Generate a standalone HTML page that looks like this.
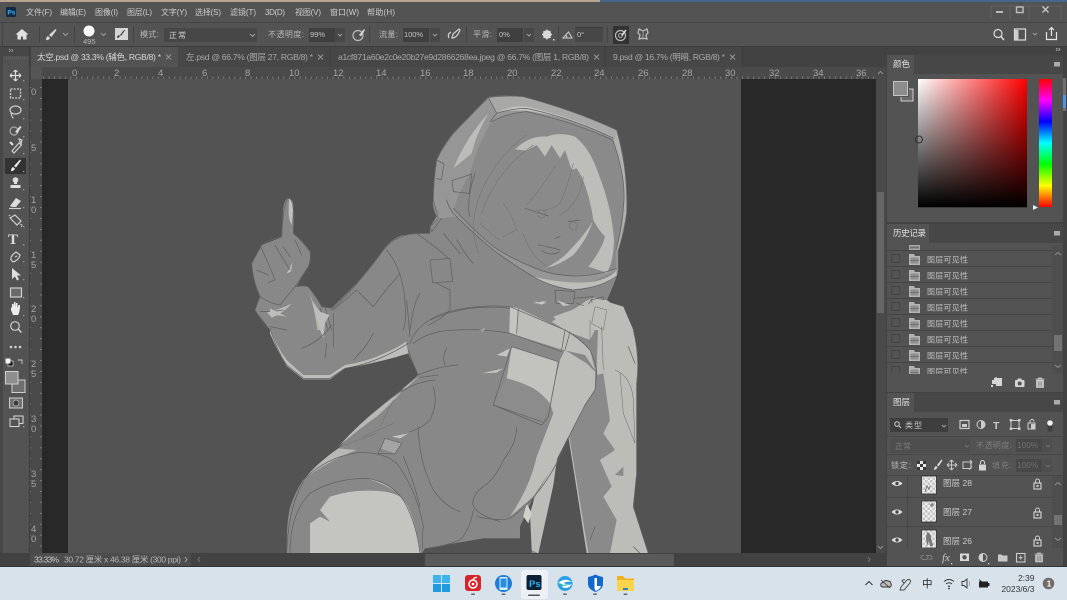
<!DOCTYPE html>
<html lang="zh"><head><meta charset="utf-8"><title>Photoshop</title>
<style>
html,body{margin:0;padding:0;width:1067px;height:600px;overflow:hidden;background:#424242}
svg{display:block;position:absolute;left:0;top:0;filter:blur(.35px)}
text{font-family:"Liberation Sans","Noto Sans CJK SC",sans-serif;font-size:8px;fill:#c4c4c4}
.ic{fill:none;stroke:#cfcfcf;stroke-width:1.2}
.f{fill:#cfcfcf;stroke:none}
.l{fill:none;stroke:#626262;stroke-width:2.2;stroke-linejoin:round;stroke-linecap:round}
.t{fill:none;stroke:#727272;stroke-width:1.6;stroke-linecap:round;stroke-linejoin:round}
.w{fill:#bcbcb8;stroke:none}
.sep{fill:#444}
.rn{font-size:9.5px;fill:#a5a5a5}
</style></head><body>
<svg width="1067" height="600" viewBox="0 0 1067 600" xmlns="http://www.w3.org/2000/svg">
<defs>
<linearGradient id="hx" x1="0" x2="1" y1="0" y2="0"><stop offset="0" stop-color="#fff"/><stop offset="1" stop-color="#f00"/></linearGradient>
<linearGradient id="vx" x1="0" x2="0" y1="0" y2="1"><stop offset="0" stop-color="#000" stop-opacity="0"/><stop offset="1" stop-color="#000"/></linearGradient>
<linearGradient id="hue" x1="0" x2="0" y1="0" y2="1"><stop offset="0" stop-color="#f00"/><stop offset=".167" stop-color="#f0f"/><stop offset=".333" stop-color="#00f"/><stop offset=".5" stop-color="#0ff"/><stop offset=".667" stop-color="#0f0"/><stop offset=".833" stop-color="#ff0"/><stop offset="1" stop-color="#f00"/></linearGradient>
<pattern id="chk" width="5" height="5" patternUnits="userSpaceOnUse"><rect width="5" height="5" fill="#eee"/><rect width="2.5" height="2.5" fill="#c5c5c5"/><rect x="2.5" y="2.5" width="2.5" height="2.5" fill="#c5c5c5"/></pattern>
<g id="hdoc"><path d="M0 1h5l1 2h5v9H0z" fill="#b5b5b5"/><rect x="1.5" y="4.5" width="8" height="6" fill="#8f8f8f"/><path d="M1 7.5h9" stroke="#6b6b6b" stroke-width=".7"/></g>
<g id="lk"><rect x="-3.5" y="-1" width="7" height="6" fill="none" stroke="#ccc" stroke-width="1.2"/><path d="M-2-1v-2a2 2 0 0 1 4 0v2" fill="none" stroke="#ccc"/><rect x="-1" y="1" width="2" height="2" fill="#ccc"/></g>
<g id="eye"><path d="M-5.5 0Q0-5 5.5 0Q0 5-5.5 0z" fill="#e2e2e2"/><circle r="1.7" fill="#444"/></g>
<pattern id="tickh" width="5.46" height="12" patternUnits="userSpaceOnUse" x="70.5" y="67"><rect x="0" y="9.5" width=".8" height="2.5" fill="#868686"/></pattern>
<pattern id="tickv" width="12" height="10.92" patternUnits="userSpaceOnUse" x="31" y="87"><rect x="9" y="0" width="3" height=".8" fill="#868686"/></pattern>
</defs>

<!-- wallpaper sliver and base -->
<rect width="1067" height="600" fill="#424242"/>
<rect width="1067" height="2" fill="#b7a58f"/>
<rect x="600" width="467" height="2" fill="#46658a"/>

<!-- title / menu -->
<rect y="2" width="1067" height="21" fill="#535353"/>
<rect x="6" y="7" width="10" height="10" rx="1.5" fill="#0f2a44"/>
<text x="7.4" y="14.6" style="font-size:6.5px;font-weight:bold;fill:#38b6f5">Ps</text>
<g>
<text x="26" y="15" textLength="26" style="fill:#ccc">文件(F)</text>
<text x="60" y="15" textLength="26" style="fill:#ccc">编辑(E)</text>
<text x="95" y="15" textLength="23" style="fill:#ccc">图像(I)</text>
<text x="127" y="15" textLength="25" style="fill:#ccc">图层(L)</text>
<text x="161" y="15" textLength="26" style="fill:#ccc">文字(Y)</text>
<text x="195" y="15" textLength="26" style="fill:#ccc">选择(S)</text>
<text x="230" y="15" textLength="26" style="fill:#ccc">滤镜(T)</text>
<text x="265" y="15" textLength="20" style="fill:#ccc">3D(D)</text>
<text x="295" y="15" textLength="26" style="fill:#ccc">视图(V)</text>
<text x="330" y="15" textLength="29" style="fill:#ccc">窗口(W)</text>
<text x="367" y="15" textLength="28" style="fill:#ccc">帮助(H)</text>
</g>
<path d="M991 19V6h70v13" fill="none" stroke="#626262"/>
<path d="M1010 6v13M1029 6v13" stroke="#626262"/>
<rect x="996" y="11" width="7" height="2" fill="#bbb"/>
<rect x="1016.5" y="7" width="6.5" height="5.5" fill="none" stroke="#bbb" stroke-width="1.5"/>
<path d="M1042.5 6.5l6 6M1048.5 6.5l-6 6" stroke="#c8c8c8" stroke-width="1.3"/>

<!-- options bar -->
<rect y="22" width="1067" height="1" fill="#444"/>
<rect y="23" width="1067" height="23" fill="#535353"/>
<rect y="46" width="1067" height="1" fill="#3d3d3d"/>
<rect y="23" x="2" width="1" height="23" fill="#454545"/>
<path d="M22 29l-6.5 5.5h2v5h3.5v-3h2v3h3.5v-5h2z" fill="#e0e0e0"/>
<rect x="39" y="26" width="1" height="17" class="sep"/>
<path d="M46 40q3 .5 4-2l-2-2q-2 1-2 4zM49 35l2.500 2 5-7-1-1z" fill="#d8d8d8"/>
<path d="M63 33l2.500 2.500 2.500-2.500" class="ic" style="stroke:#9a9a9a;stroke-width:1"/>
<rect x="74" y="26" width="1" height="17" class="sep"/>
<circle cx="89" cy="31" r="5.500" fill="#fafafa"/>
<text x="83" y="44" style="font-size:7.500px;fill:#b5b5b5">495</text>
<path d="M101 33l2.500 2.500 2.500-2.500" class="ic" style="stroke:#9a9a9a;stroke-width:1"/>
<rect x="115" y="28" width="13" height="12" fill="#d5d5d5"/>
<path d="M117 38q2 0 3-2l-1-1q-2 .5-2 3zM120 35l1 1 4-5.500-1-.5z" fill="#444"/>
<rect x="133" y="26" width="1" height="17" class="sep"/>
<text x="140" y="37" textLength="19" style="fill:#b8b8b8">模式:</text>
<rect x="164" y="28" width="93" height="14" rx="1" fill="#474747"/>
<text x="169" y="38" textLength="17" style="fill:#d0d0d0">正常</text>
<path d="M250 34l2.500 2.500 2.500-2.500" class="ic" style="stroke:#a0a0a0;stroke-width:1"/>
<text x="268" y="37" textLength="36" style="fill:#b8b8b8">不透明度:</text>
<rect x="309" y="28" width="26" height="14" fill="#3f3f3f"/><rect x="335" y="28" width="10" height="14" fill="#484848"/>
<text x="310" y="37" textLength="15" style="font-size:7.500px">99%</text>
<path d="M338 34l2 2 2-2" class="ic" style="stroke:#a0a0a0;stroke-width:1"/>
<circle cx="358" cy="35.500" r="5" class="ic" style="stroke:#bbb"/><path d="M359 35l5-6 1 1-4 6.500z" fill="#d5d5d5"/>
<rect x="369" y="26" width="1" height="17" class="sep"/>
<text x="379" y="37" textLength="19" style="fill:#b8b8b8">流量:</text>
<rect x="403" y="28" width="26" height="14" fill="#3f3f3f"/><rect x="430" y="28" width="10" height="14" fill="#484848"/>
<text x="404" y="37" textLength="19" style="font-size:7.500px">100%</text>
<path d="M433 34l2 2 2-2" class="ic" style="stroke:#a0a0a0;stroke-width:1"/>
<path d="M449 38q-2-4 2-6M452 38q5 0 8-8l-1-1-6 5z" class="ic"/>
<rect x="466" y="26" width="1" height="17" class="sep"/>
<text x="473" y="37" textLength="19" style="fill:#b8b8b8">平滑:</text>
<rect x="497" y="28" width="26" height="14" fill="#3f3f3f"/><rect x="524" y="28" width="10" height="14" fill="#484848"/>
<text x="499" y="37" style="font-size:7.500px">0%</text>
<path d="M527 34l2 2 2-2" class="ic" style="stroke:#a0a0a0;stroke-width:1"/>
<circle cx="547" cy="34.500" r="3" fill="none" stroke="#d8d8d8" stroke-width="2.500"/>
<path d="M547 29.500v10M542 34.500h10M543.500 31l7 7M550.500 31l-7 7" stroke="#d8d8d8" stroke-width="1.200"/>
<rect x="553" y="39" width="1.500" height="1.500" fill="#ddd"/>
<rect x="558" y="26" width="1" height="17" class="sep"/>
<path d="M563 38h9l-3.500-6zM567 38q0-2-1.500-3" class="ic" style="stroke-width:1"/>
<rect x="575" y="27" width="28" height="15" fill="#474747"/><rect x="575" y="27" width="28" height=".8" fill="#3a3a3a"/>
<text x="577" y="37" style="font-size:7.500px">0°</text>
<rect x="607" y="26" width="1" height="17" class="sep"/>
<rect x="613" y="26" width="16" height="18" fill="#333"/>
<circle cx="620.500" cy="35.500" r="5" class="ic" style="stroke:#bbb"/><circle cx="620.500" cy="35.500" r="2" class="ic" style="stroke:#999"/><path d="M621 35l4.500-5.500 1 1-4 5.500z" fill="#ddd"/>
<path d="M643 31l-4-2-1 4 2 2-1 4 4-1 4 1-1-4 2-2-1-4z" class="ic" style="stroke:#c4c4c4"/><path d="M643 30v10" stroke="#999"/>
<circle cx="998" cy="33.500" r="4" class="ic" style="stroke:#ddd"/><path d="M1001 36.500l3 3.500" class="ic" style="stroke:#ddd;stroke-width:1.500"/>
<rect x="1014.500" y="29" width="11" height="11" fill="none" stroke="#ddd" stroke-width="1.200"/><rect x="1015" y="30" width="3.500" height="9.500" fill="#ccc"/>
<path d="M1033 33l2 2 2-2" class="ic" style="stroke:#a0a0a0;stroke-width:1"/>
<path d="M1046.500 32v7.500h10V32M1051.500 36V28M1049 30l2.500-2.500 2.500 2.500" class="ic" style="stroke:#e5e5e5"/>

<!-- left tool strip -->
<rect y="47" width="30" height="506" fill="#535353"/>
<rect x="0" y="47" width="3" height="520" fill="#474747"/>
<rect x="29" y="47" width="1" height="520" fill="#3d3d3d"/>
<rect x="3" y="47" width="26" height="9" fill="#474747"/>
<path d="M9 49l1.500 1.500L9 52M11.500 49l1.500 1.500L11.500 52" class="ic" style="stroke:#aaa;stroke-width:.7"/>
<path d="M6 58h20" stroke="#6a6a6a" stroke-dasharray="1 1"/>
<path d="M15.500 70v11M10 75.500h11M15.500 70l-2 2M15.500 70l2 2M15.500 81l-2-2M15.500 81l2-2M10 75.500l2-2M10 75.500l2 2M21 75.500l-2-2M21 75.500l-2 2" class="ic" style="stroke:#dcdcdc"/>
<rect x="10.500" y="89" width="10" height="9" fill="none" stroke="#cfcfcf" stroke-width="1.300" stroke-dasharray="2 1.200"/>
<ellipse cx="15.500" cy="110" rx="5.500" ry="4" class="ic"/><path d="M11 113q1 5 2.500 5" class="ic"/>
<circle cx="14" cy="131" r="4" class="ic" style="stroke:#aaa"/><path d="M15 132l5-6 1.500 1-4 6z" fill="#dedede"/>
<path d="M12 151l7-8 2.500 2-7.500 8zM19 139l3 1-1 4z" class="ic"/><path d="M10 142l3 3" stroke="#ddd" stroke-width="2"/>
<rect x="5" y="158" width="21" height="16" fill="#333"/>
<path d="M11 171q3 .5 4-2.500l-2-1.500q-2 1-2 4zM14 166l2 1.500 5-7-1-1z" fill="#ececec"/>
<circle cx="15.500" cy="180" r="2.800" fill="#ddd"/><path d="M14 182h3v2h-3zM10.500 185h10v3h-10z" fill="#ddd"/>
<path d="M10 206l6-8 5 3-5 6h-4z" fill="#ddd"/><path d="M9 208.500h12" class="ic"/>
<path d="M10 218l5-3 6 6-4 4-6-6zM10 216l-1-1" class="ic"/><path d="M20 224l2 1-.5 2" class="ic" style="stroke-width:.9"/>
<text x="8" y="244" style="font-family:'Liberation Serif',serif;font-size:15px;font-weight:bold;fill:#dcdcdc">T</text>
<path d="M11 260q-1-4 5-8l4 3q-1 5-7 7zM15 257l2-1" class="ic"/>
<path d="M12 268v11l3-2.500 2 4 2-1-2-4h4z" fill="#dfdfdf"/>
<rect x="10.500" y="288" width="11" height="9" fill="#6a6a6a" stroke="#d0d0d0" stroke-width="1.200"/>
<path d="M11 310v-3l1 1v-4h1.500v3l.5-5h1.500v5l.5-4h1.500v5l1-3h1.500q0 7-2 10h-5z" fill="#ececec"/>
<circle cx="15" cy="326" r="4.300" class="ic"/><path d="M18 329l3.500 3.500" class="ic" style="stroke-width:1.500"/>
<circle cx="11" cy="347" r="1.300" class="f"/><circle cx="15.500" cy="347" r="1.300" class="f"/><circle cx="20" cy="347" r="1.300" class="f"/>
<rect x="8" y="361" width="5" height="5" fill="#111" stroke="#ddd" stroke-width=".7"/><rect x="5.500" y="358.500" width="5" height="5" fill="#f2f2f2"/>
<path d="M18 360h4v4" class="ic" style="stroke-width:.9"/>
<rect x="12" y="380" width="13" height="12.500" fill="#6f6f6f" stroke="#cfcfcf"/>
<rect x="5.500" y="371.500" width="12.500" height="12.500" fill="#8e8e8e" stroke="#cfcfcf"/>
<rect x="9.500" y="398" width="13" height="10" fill="#707070" stroke="#cfcfcf"/><circle cx="16" cy="403" r="3" fill="#3d3d3d" stroke="#bbb" stroke-width=".7"/>
<rect x="14" y="416" width="9" height="7.500" fill="none" stroke="#cfcfcf" stroke-width="1.100"/><rect x="10" y="419" width="9" height="7.500" fill="#535353" stroke="#cfcfcf" stroke-width="1.100"/>
<g fill="#9c9c9c"><rect x="23" y="80" width="1.300" height="1.300"/><rect x="23" y="99" width="1.300" height="1.300"/><rect x="23" y="118" width="1.300" height="1.300"/><rect x="23" y="136" width="1.300" height="1.300"/><rect x="23" y="153" width="1.300" height="1.300"/><rect x="23" y="171" width="1.300" height="1.300"/><rect x="23" y="189" width="1.300" height="1.300"/><rect x="23" y="207" width="1.300" height="1.300"/><rect x="23" y="226" width="1.300" height="1.300"/><rect x="23" y="244" width="1.300" height="1.300"/><rect x="23" y="261" width="1.300" height="1.300"/><rect x="23" y="279" width="1.300" height="1.300"/><rect x="23" y="297" width="1.300" height="1.300"/><rect x="23" y="315" width="1.300" height="1.300"/><rect x="23" y="426" width="1.300" height="1.300"/></g>

<!-- tabs -->
<rect x="30" y="47" width="856" height="20" fill="#424242"/>
<rect x="31" y="47" width="147" height="20" fill="#535353"/>
<rect x="178" y="47" width="152" height="20" fill="#474747"/>
<rect x="330" y="47" width="275" height="20" fill="#474747"/>
<rect x="605" y="47" width="137" height="20" fill="#474747"/>
<path d="M330 47v20M605 47v20M742 47v20" stroke="#3c3c3c"/>
<text x="37" y="60" textLength="124" style="font-size:8.500px;fill:#d8d8d8">太空.psd @ 33.3% (辅色, RGB/8) *</text>
<text x="186" y="60" textLength="127" style="font-size:8.500px;fill:#a8a8a8">左.psd @ 66.7% (图层 27, RGB/8) *</text>
<text x="338" y="60" textLength="251" style="font-size:8.500px;fill:#a8a8a8">a1cf871a60e2c0e20b27e9d2866268ea.jpeg @ 66.7% (图层 1, RGB/8)</text>
<text x="613" y="60" textLength="112" style="font-size:8.500px;fill:#a8a8a8">9.psd @ 16.7% (明暗, RGB/8) *</text>
<path d="M166 54.500l5 5M171 54.500l-5 5M318 54.500l5 5M323 54.500l-5 5M594 54.500l5 5M599 54.500l-5 5M730 54.500l5 5M735 54.500l-5 5" stroke="#9a9a9a" stroke-width=".9"/>

<!-- rulers -->
<rect x="30" y="67" width="846" height="12" fill="#4a4a4a"/>
<rect x="30" y="67" width="846" height="12" fill="url(#tickh)"/>
<rect x="31" y="67" width="11" height="12" fill="#555"/>
<rect x="30" y="79" width="12" height="474" fill="#4a4a4a"/>
<rect x="30" y="79" width="12" height="474" fill="url(#tickv)"/>
<g>
<text x="72" y="76" class="rn">0</text><text x="114" y="76" class="rn">2</text><text x="158" y="76" class="rn">4</text><text x="202" y="76" class="rn">6</text><text x="245" y="76" class="rn">8</text><text x="289" y="76" class="rn">10</text><text x="333" y="76" class="rn">12</text><text x="376" y="76" class="rn">14</text><text x="420" y="76" class="rn">16</text><text x="463" y="76" class="rn">18</text><text x="507" y="76" class="rn">20</text><text x="551" y="76" class="rn">22</text><text x="594" y="76" class="rn">24</text><text x="638" y="76" class="rn">26</text><text x="682" y="76" class="rn">28</text><text x="725" y="76" class="rn">30</text><text x="769" y="76" class="rn">32</text><text x="813" y="76" class="rn">34</text><text x="856" y="76" class="rn">36</text>
<text x="31" y="95" class="rn">0</text><text x="31" y="151" class="rn">5</text>
<text x="31" y="203" class="rn">1</text><text x="31" y="213" class="rn">0</text>
<text x="31" y="258" class="rn">1</text><text x="31" y="268" class="rn">5</text>
<text x="31" y="312" class="rn">2</text><text x="31" y="322" class="rn">0</text>
<text x="31" y="367" class="rn">2</text><text x="31" y="377" class="rn">5</text>
<text x="31" y="422" class="rn">3</text><text x="31" y="432" class="rn">0</text>
<text x="31" y="477" class="rn">3</text><text x="31" y="487" class="rn">5</text>
<text x="31" y="532" class="rn">4</text><text x="31" y="542" class="rn">0</text>
</g>

<!-- canvas -->
<rect x="42" y="79" width="834" height="474" fill="#282828"/>
<rect x="68" y="79" width="673" height="474" fill="#535353"/>

<!-- figure silhouette -->
<path d="M288 198Q293 198 293 208Q294 222 293 233Q303 242 310 252Q311 260 308 267L296 287Q303 285 308 287Q316 295 322 307L332 308L350 290Q368 272 383 250Q392 238 403 235L430 233L430 227L438 218Q432 210 433 200Q433 180 437 160Q443 145 453 133L488 97Q505 94 523 97Q575 110 617 130Q628 170 627 213Q624 235 618 250L618 272Q614 285 607 300Q625 312 633 330Q640 360 637 383L637 473L633 507L648 553L287 553Q286 525 290 507Q295 492 303 480Q320 465 340 447Q358 425 377 410Q390 398 402 390L418 375L408 353Q378 362 345 368L330 378L303 378L287 365Q277 350 270 330L255 310L260 297Q252 280 252 263L262 245L282 237L283 210Q284 200 288 198Z" fill="#888"/>

<!-- upper group -->
<g transform="translate(240 90) scale(.33333)">
 <path d="M745 22Q800 15 850 20Q1000 60 1130 120Q1165 240 1160 370Q1150 440 1135 480L1135 540L1000 600L880 560L760 480L650 380L600 385L570 410L590 380L580 330L590 210L640 130Z" fill="#969696"/>
 <path d="M745 22Q800 15 850 20Q1000 60 1130 120L1120 145Q1000 85 860 55Q810 55 770 70Z" fill="#a8a8a6"/>
 <path d="M640 235Q680 140 745 70Q710 130 695 190Z" fill="#bcbcb8"/>
 <path d="M775 65Q820 45 860 50Q990 80 1110 135Q1000 85 860 62Q815 60 775 65Z" fill="#c4c4c0"/>
 <path d="M1130 120Q1165 240 1160 370L1135 480L1128 480Q1150 420 1152 340Q1150 240 1120 150Z" fill="#b0b0ad"/>
 <!-- visor -->
 <path d="M755 95Q800 70 860 65Q1000 95 1118 150Q1155 250 1152 330Q1145 420 1128 480L1128 535Q1060 560 1000 558Q940 555 900 540Q820 510 760 470L640 360Q655 310 690 250Q715 160 755 95Z" fill="#8a8a8a"/>
 <!-- hair light -->
 <path d="M825 178Q870 135 920 140Q960 125 1005 140Q1050 175 1075 250Q1115 350 1122 450Q1120 520 1100 548L1045 530Q1085 480 1095 440Q1075 420 1060 390Q1050 320 1025 260L1010 235L995 240L975 180L960 205L935 165L915 200L890 165L860 182Z" fill="#bdbdb9"/>
 <path d="M1058 395Q1040 450 1000 495Q960 525 915 535Q965 510 990 480Q1030 440 1058 395Z" fill="#bdbdb9"/>
 <!-- collar -->
 <path d="M880 560Q990 585 1060 575Q1110 565 1130 540L1130 560Q1090 590 1000 598Q930 590 880 560Z" fill="#bdbdb9"/>
 <!-- chest light under collar -->
 <path d="M935 695Q1000 660 1040 632L1060 622L1150 650L1180 720H975Z" fill="#bcbcb8"/>
 <path d="M810 650L835 655L975 720H810Z" fill="#c2c2be"/>
 <path d="M1060 650L1095 655L1095 720L1055 720Z" fill="#c4c4c0"/>
 <path d="M880 640L920 632L905 640Z" fill="#c8c8c4"/>
 <!-- hand highlights -->
 <path d="M147 325Q160 330 160 350L155 405Q145 385 146 365Z" fill="#c0c0bc"/>
 <path d="M80 665Q120 660 155 640Q130 670 95 683Z" fill="#bdbdb9"/>
 <path d="M205 600Q225 650 245 720L232 720Q225 660 205 600Z" fill="#b4b4b0"/>
 <path d="M140 550Q150 535 157 518L153 545Z" fill="#c0c0bc"/>
 <!-- helmet lines -->
 <path class="l" d="M745 22L770 70L750 95M770 70Q815 55 860 55Q1000 85 1120 145M745 22Q800 15 850 20Q1000 60 1130 120Q1165 240 1160 370Q1150 440 1135 480L1135 540M755 95Q800 70 860 65Q1000 95 1118 150Q1155 250 1152 330Q1145 420 1128 480"/>
 <path class="l" d="M640 355Q700 420 760 470Q820 510 900 540Q940 555 1000 558Q1060 560 1130 535M620 330Q625 350 640 370Q700 430 760 480Q820 525 880 560Q930 590 1000 600Q1080 595 1135 555"/>
 <path class="l" d="M590 210L612 222L604 270L590 265M636 272L695 252L688 310L640 305Z"/>
 <path class="l" d="M745 22L640 130Q600 180 590 210Q580 270 580 330L595 385L570 410L575 425L605 385"/>
 <path class="l" d="M945 600L1005 605L1000 640L948 640ZM1000 625L1060 620L1040 650L1010 640M1055 630L1090 620L1100 690L1065 700Z"/>
 <!-- hair and face -->
 <path class="t" d="M715 490Q680 400 730 290Q780 190 860 135M880 165Q770 240 725 370M945 230Q900 300 860 345M1000 220Q980 300 960 340Q930 365 890 360M1030 260Q1020 340 960 375M790 340Q820 380 830 420L790 440M850 430Q870 500 930 535M720 400Q760 440 780 450"/>
 <path class="t" d="M917 372a12 12 0 1 1 0-.1zM1012 408a12 12 0 1 1 0-.1z"/>
 <path class="l" d="M855 355Q890 365 925 378M985 395L1020 390M895 465Q925 470 960 480M905 482Q930 500 958 486M945 445L960 440M705 250Q680 320 688 380"/>
 <!-- hand and arm -->
 <path class="l" d="M147 325Q130 330 125 440M147 325Q165 330 160 430Q190 455 210 485Q214 510 205 530L165 590Q190 585 205 590Q228 620 245 650L275 655M125 440Q90 448 65 465L35 520Q38 570 60 620L45 660L75 710M62 470Q90 530 105 570L85 578M105 465Q130 510 150 540M130 470L150 500M165 450L185 495M50 540L85 555M60 620Q90 640 120 645L165 590M60 665Q100 665 130 660M240 655L265 720M255 650L275 720"/>
 <path class="l" d="M275 660Q350 590 430 480Q460 440 520 430L570 430M440 480Q490 540 495 640Q500 690 490 720M530 430Q600 480 625 505M570 510L630 505L638 575L578 578ZM590 580L630 600L630 660Q600 690 565 705M280 660L350 600L400 650L430 610L480 550M510 720Q520 640 540 610M570 690Q680 640 810 655M650 450Q680 500 700 520M610 430L660 490"/>
</g>

<!-- lower group -->
<g transform="translate(270 300) scale(.33333)">
 <!-- right arm light -->
 <path d="M985 50L1010 0Q1060 35 1090 90Q1110 170 1100 250L1100 520L1090 620L1135 760H950L895 410L975 310L980 210Z" fill="#bcbcb8"/>
 <path d="M850 50L990 0L1010 0L985 70L960 120L880 90Z" fill="#bcbcb8"/>
 <path d="M1000 220L1020 360L1000 400L1035 450L990 480L1025 560L1000 590L1040 660L1020 760H955L898 410L945 310L980 225Z" fill="#8a8a8a"/>
 <path d="M1035 525L1060 500L1060 528Z" fill="#8a8a8a"/>
 <!-- torso right strip -->
 <path d="M885 150L950 190L975 215L975 270L945 315L900 400L862 480L790 590L720 650Q780 560 800 470L850 340L840 310L870 180Z" fill="#bdbdb9"/>
 <!-- belt -->
 <path d="M720 20L885 90Q930 115 960 150L975 210L945 165L880 150L720 100Z" fill="#bdbdb9"/>
 <path d="M720 20L745 25L740 100L718 98Z" fill="#c4c4c0"/>
 <!-- pocket -->
 <path d="M725 140L865 185L840 310Q815 280 790 265Q750 245 710 235Z" fill="#c2c2be"/>
 <path d="M710 235Q750 245 790 265Q815 280 840 310L815 375L670 315Z" fill="#8c8c8c"/>
 <!-- highlights -->
 <path d="M680 165L720 145L710 170ZM635 220L700 205L680 218Z" fill="#c4c4c0"/>
 <path d="M625 90L645 85L640 95Z" fill="#c4c4c0"/>
 <path d="M790 5L830 8L815 14ZM860 0L900 15L880 18Z" fill="#c4c4c0"/>
 <!-- arm bottom rim -->
 <path d="M0 85Q20 140 50 180L100 225H180L225 195Q300 185 385 140L408 125L415 160Q320 190 225 205L180 238H100L50 198Q20 150 0 100Z" fill="#bdbdb9"/>
 <path d="M125 0L150 90L160 115L165 70L178 45L150 35Z" fill="#bdbdb9"/>
 <path d="M0 25Q30 40 50 50L20 45L0 35Z" fill="#bdbdb9"/>
 <!-- left rim strips -->
 <path d="M445 232Q420 245 395 270L410 262ZM395 275Q290 345 205 440Q270 385 320 350Q365 310 395 275ZM205 445Q140 490 100 540Q160 490 260 450Z" fill="#b8b8b4"/>
 <path d="M365 410L415 400L390 415Z" fill="#c4c4c0"/>
 <path d="M345 415L395 430L375 460L330 445Z" fill="#a4a4a4"/>
 <!-- thigh -->
 <path d="M120 760L120 670L150 650L180 665L150 630L180 590Q240 570 300 572Q360 572 390 590Q430 620 452 760Z" fill="#c4c4c0"/>
 <path d="M290 535Q350 540 400 600Q370 560 290 535Z" fill="#bdbdb9"/>
 <!-- dark gap and lower -->
 <path d="M895 410L950 760H805L850 555L862 475Z" fill="#535353"/>
 <path d="M750 715L640 715L465 745L455 760H785L790 590L750 680Z" fill="#535353"/>
 <path d="M860 480L795 590L780 640L785 750L805 760L850 555Z" fill="#bcbcb8"/>
 <path d="M770 610L785 640L775 670L760 650Z" fill="#d0d0cc"/>
 <!-- torso lines -->
 <path class="l" d="M420 130Q440 70 520 40Q620 10 720 20M430 130Q480 90 560 90Q640 85 720 100M720 20L885 90Q930 115 960 150Q980 190 980 220L975 270L945 315M720 100L875 155M745 25L740 100M885 90L875 150M900 95L885 150M725 140L865 185L835 350L815 375L670 315L725 140M670 315L815 365"/>
 <path class="l" d="M945 315Q900 400 860 490Q800 600 720 655Q690 665 620 650M445 225Q500 200 565 195M530 145Q515 170 525 195M415 150Q420 170 445 225"/>
 <path class="l" d="M490 260Q505 310 480 360Q455 385 420 395M395 275Q440 245 495 240M450 232L505 225M445 380Q445 480 490 570Q525 620 570 635M740 380Q740 430 700 480Q680 530 640 560Q610 580 608 610Q610 640 690 665M610 630Q600 690 570 720Q520 740 470 745"/>
 <path class="l" d="M50 760Q55 620 100 545M60 760Q60 640 120 580Q190 535 290 535Q360 545 400 600Q440 670 450 760M100 540Q170 470 265 458Q340 455 380 490Q440 570 460 680Q455 720 458 745M400 470Q430 540 450 620"/>
 <path class="l" d="M325 460L345 415L395 430L375 462Z"/>
 <path class="t" d="M330 380L370 300M210 440L320 400M280 410L370 370"/>
 <path class="l" d="M1090 90Q1110 170 1100 250L1100 520L1090 620L1135 760M960 720L975 680M1090 740L1110 760M1075 140L1095 190"/>
 <path class="t" d="M1035 210Q1085 230 1090 300L1095 430M1050 220L1060 340L1095 430M960 130L960 60M995 80L1000 210M975 20L1010 30L1000 90L965 70Z"/>
 <!-- arm lines -->
 <path class="l" d="M0 85Q20 150 50 195L100 235H180L225 205Q320 190 415 130M95 145Q150 125 185 75M190 40L190 140M165 175L170 130M250 180Q290 140 310 100M0 80L50 90M410 0L420 110"/>
</g>

<!-- vertical scrollbar -->
<rect x="876" y="67" width="10" height="486" fill="#4a4a4a"/>
<rect x="877" y="192" width="7" height="121" fill="#666"/>
<path d="M878 74l2.500-2.500 2.500 2.500M878 546l2.500 2.500 2.500-2.500" class="ic" style="stroke:#8f8f8f;stroke-width:1"/>

<!-- status bar -->
<rect x="30" y="553" width="856" height="13" fill="#424242"/>
<rect x="30" y="553" width="161" height="13" fill="#4d4d4d"/>
<rect x="425" y="554" width="249" height="12" fill="#5a5a5a"/>
<text x="34" y="562.500" textLength="25" style="font-size:8.500px;fill:#cacaca">33.33%</text>
<text x="64" y="562.500" textLength="117" style="font-size:8.500px;fill:#b5b5b5">30.72 厘米 x 46.38 厘米 (300 ppi)</text>
<path d="M185 557l2 2.500-2 2.500" class="ic" style="stroke:#aaa;stroke-width:.9"/>
<path d="M200 557l-2 2.500 2 2.500M868 557l2 2.500-2 2.500" class="ic" style="stroke:#7a7a7a;stroke-width:.9"/>

<!-- right panels -->
<rect x="886" y="47" width="181" height="520" fill="#424242"/>
<path d="M1056 48l1.500 1.500-1.500 1.500M1058.500 48l1.500 1.500-1.500 1.500" class="ic" style="stroke:#bbb;stroke-width:.7"/>
<!-- colour panel -->
<rect x="887" y="55" width="176" height="167" fill="#535353"/>
<rect x="914" y="55" width="149" height="19" fill="#474747"/>
<text x="893" y="67" textLength="17" style="font-size:8.500px;fill:#e4e4e4">颜色</text>
<rect x="1054" y="62" width="6" height="4.500" fill="#aaa"/>
<rect x="901" y="89" width="12" height="12" fill="#6b6b6b" stroke="#cfcfcf"/>
<rect x="892.500" y="80.500" width="16" height="16" fill="#9a9a9a" stroke="#535353" stroke-width="1"/>
<rect x="893.500" y="81.500" width="14" height="14" fill="#8c8c8c" stroke="#c5c5c5"/>
<rect x="918" y="79" width="109" height="128" fill="url(#hx)"/>
<rect x="918" y="79" width="109" height="128" fill="url(#vx)"/>
<rect x="918" y="207" width="109" height="1" fill="#3b3b3b"/>
<circle cx="919" cy="139.500" r="3.500" fill="none" stroke="#333" stroke-width="1.100"/>
<rect x="1039" y="79" width="13" height="128" fill="url(#hue)"/>
<path d="M1033 205l5 2.500-5 2.500z" fill="#eee"/>
<rect x="1063" y="78" width="3" height="33" fill="#707070"/>
<rect x="1063" y="95" width="3" height="13" fill="#4d94e8"/>
<!-- history -->
<rect x="887" y="224" width="176" height="168" fill="#535353"/>
<rect x="929" y="224" width="134" height="19" fill="#474747"/>
<text x="893" y="236" textLength="33" style="font-size:8.500px;fill:#e4e4e4">历史记录</text>
<rect x="1054" y="231" width="6" height="4.500" fill="#aaa"/>
<g stroke="#464646" fill="none">
<path d="M887 250.500H1052M887 266.500H1052M887 282.500H1052M887 298.500H1052M887 314.500H1052M887 330.500H1052M887 346.500H1052M887 362.500H1052"/>
<rect x="891.500" y="254.500" width="8" height="8"/><rect x="891.500" y="270.500" width="8" height="8"/><rect x="891.500" y="286.500" width="8" height="8"/><rect x="891.500" y="302.500" width="8" height="8"/><rect x="891.500" y="318.500" width="8" height="8"/><rect x="891.500" y="334.500" width="8" height="8"/><rect x="891.500" y="350.500" width="8" height="8"/><rect x="891.500" y="366.500" width="8" height="8"/>
</g>
<rect x="909" y="245" width="11" height="5" fill="#a8a8a8"/><rect x="910" y="246.500" width="9" height="2" fill="#707070"/>
<use href="#hdoc" x="909" y="253"/><use href="#hdoc" x="909" y="269"/><use href="#hdoc" x="909" y="285"/><use href="#hdoc" x="909" y="301"/><use href="#hdoc" x="909" y="317"/><use href="#hdoc" x="909" y="333"/><use href="#hdoc" x="909" y="349"/><use href="#hdoc" x="909" y="365"/>
<g>
<text x="927" y="262.500" textLength="41" style="fill:#c0c0c0">图层可见性</text>
<text x="927" y="278.500" textLength="41" style="fill:#c0c0c0">图层可见性</text>
<text x="927" y="294.500" textLength="41" style="fill:#c0c0c0">图层可见性</text>
<text x="927" y="310.500" textLength="41" style="fill:#c0c0c0">图层可见性</text>
<text x="927" y="326.500" textLength="41" style="fill:#c0c0c0">图层可见性</text>
<text x="927" y="342.500" textLength="41" style="fill:#c0c0c0">图层可见性</text>
<text x="927" y="358.500" textLength="41" style="fill:#c0c0c0">图层可见性</text>
<text x="927" y="374.500" textLength="41" style="fill:#c0c0c0">图层可见性</text>
</g>
<rect x="887" y="374" width="176" height="18" fill="#535353"/>
<rect x="1052" y="245" width="11" height="129" fill="#4e4e4e"/>
<rect x="1054" y="335" width="8" height="16" fill="#727272"/>
<path d="M1055 255l3-2.500 3 2.500M1055 365l3 2.500 3-2.500" class="ic" style="stroke:#8f8f8f;stroke-width:1"/>
<path d="M992 384h5v-3h5v-3h-5v-1l-3 1v2h-2z" fill="#d5d5d5"/><path d="M998 378h4v8h-6v-3" fill="#d5d5d5"/><path d="M993 386h-2M992 385v2" stroke="#fff"/>
<rect x="1015" y="380" width="9.500" height="7" rx="1" fill="#d5d5d5"/><rect x="1017.500" y="378.500" width="4" height="2" fill="#d5d5d5"/><circle cx="1019.700" cy="383.500" r="2" fill="#535353"/>
<path d="M1036.500 380h7v7.500h-7zM1035.500 379h9M1038.500 379v-1h3v1" fill="#c8c8c8" stroke="#c8c8c8" stroke-width=".8"/><path d="M1038.500 381.500v5M1040 381.500v5M1041.500 381.500v5" stroke="#6b6b6b" stroke-width=".5"/>
<!-- layers -->
<rect x="887" y="393" width="176" height="173" fill="#535353"/>
<rect x="914" y="393" width="149" height="19" fill="#474747"/>
<text x="893" y="405" textLength="17" style="font-size:8.500px;fill:#e4e4e4">图层</text>
<rect x="1054" y="400" width="6" height="4.500" fill="#aaa"/>
<rect x="890" y="418" width="58" height="14" fill="#3e3e3e"/>
<circle cx="897" cy="424" r="2.300" class="ic" style="stroke-width:1"/><path d="M899 426l2 2" class="ic" style="stroke-width:1"/>
<text x="905" y="428" textLength="17">类型</text>
<path d="M942 425l2 2 2-2" class="ic" style="stroke:#a0a0a0;stroke-width:1"/>
<rect x="960" y="420.500" width="9" height="8" fill="none" stroke="#ccc" stroke-width="1.200"/><rect x="962" y="424" width="5" height="3" fill="#ccc"/>
<circle cx="981" cy="424.500" r="4" fill="none" stroke="#ccc"/><path d="M981 420.500a4 4 0 0 1 0 8z" fill="#ccc"/>
<text x="993" y="429" style="font-size:10.500px;font-weight:bold;fill:#ccc">T</text>
<rect x="1011" y="420.500" width="8" height="8" fill="none" stroke="#ccc"/><rect x="1009.700" y="419" width="2.500" height="2.500" fill="#ccc"/><rect x="1018" y="419" width="2.500" height="2.500" fill="#ccc"/><rect x="1009.700" y="427.500" width="2.500" height="2.500" fill="#ccc"/><rect x="1018" y="427.500" width="2.500" height="2.500" fill="#ccc"/>
<path d="M1028 429v-6h7v6zM1030 423v-1.500a2 2 0 0 1 4 0" fill="none" stroke="#ccc"/><rect x="1031" y="424" width="4" height="5" fill="#ccc"/>
<rect x="1047.500" y="420" width="5" height="12" rx="2.500" fill="#3f3f3f"/><circle cx="1050" cy="423" r="2.800" fill="#f0f0f0"/>
<path d="M887 436.500H1063M887 454.500H1063M887 475.500H1063" stroke="#474747"/>
<rect x="890" y="439" width="80" height="14" fill="#4e4e4e"/>
<text x="895" y="449" textLength="16" style="fill:#7b7b7b">正常</text>
<path d="M965 445l2 2 2-2" class="ic" style="stroke:#707070;stroke-width:1"/>
<text x="976" y="448" textLength="36" style="fill:#7e7e7e">不透明度:</text>
<rect x="1016" y="439" width="26" height="13" fill="#484848"/><rect x="1043" y="439" width="9" height="13" fill="#4e4e4e"/>
<text x="1017" y="448" textLength="21" style="font-size:8px;fill:#717171">100%</text>
<path d="M1046 445l2 2 2-2" class="ic" style="stroke:#6f6f6f;stroke-width:1"/>
<text x="891" y="468" textLength="20" style="fill:#bcbcbc">锁定:</text>
<rect x="917" y="461" width="9" height="9" fill="#e8e8e8"/><path d="M917 461h3v3h-3zM923 461h3v3h-3zM920 464h3v3h-3zM917 467h3v3h-3zM923 467h3v3h-3z" fill="#3a3a3a"/>
<path d="M934 470q3-.5 3.500-3l-1.500-1q-2 1-2 4zM937 465l1.500 1.500 4-6-1-1z" fill="#d8d8d8"/>
<path d="M951.500 460v10M947 465h10M951.500 460l-2 2M951.500 460l2 2M951.500 470l-2-2M951.500 470l2-2M947 465l2-2M947 465l2 2M957 465l-2-2M957 465l-2 2" class="ic" style="stroke:#c8c8c8;stroke-width:1"/>
<rect x="963" y="462" width="8" height="6.500" fill="none" stroke="#c8c8c8"/><path d="M970 460l2 2-2 2" class="ic" style="stroke-width:.9"/><path d="M972 466l-3 4" class="ic" style="stroke-width:.8"/>
<rect x="979" y="464.500" width="7" height="6" fill="#d5d5d5"/><path d="M980.500 464v-1.500a2 2 0 0 1 4 0v1.500" fill="none" stroke="#d5d5d5" stroke-width="1.100"/>
<text x="992" y="468" textLength="20" style="fill:#7e7e7e">填充:</text>
<rect x="1016" y="459" width="26" height="13" fill="#484848"/><rect x="1043" y="459" width="9" height="13" fill="#4e4e4e"/>
<text x="1017" y="468" textLength="21" style="font-size:8px;fill:#717171">100%</text>
<path d="M1046 465l2 2 2-2" class="ic" style="stroke:#6f6f6f;stroke-width:1"/>
<!-- layer rows -->
<rect x="887" y="476" width="165" height="72" fill="#535353"/>
<path d="M887 497.500H1052M887 526.500H1052" stroke="#474747"/>
<path d="M907.500 476v72" stroke="#474747"/>
<rect x="921.500" y="476" width="15" height="18" fill="url(#chk)" stroke="#2d2d2d" stroke-width=".8"/>
<path d="M925 492l2-6 2 3 1-3" stroke="#777" fill="none"/>
<rect x="921.500" y="501" width="15" height="21" fill="url(#chk)" stroke="#2d2d2d" stroke-width=".8"/>
<circle cx="932" cy="505" r="1.800" fill="#888"/>
<rect x="921.500" y="530" width="15" height="18" fill="url(#chk)" stroke="#2d2d2d" stroke-width=".8"/>
<path d="M927 532q4 1 4 6l2 8h-3l-1-5-2 5-1-8z" fill="#777"/>
<use href="#eye" x="897" y="483.500"/><use href="#eye" x="897" y="512"/><use href="#eye" x="897" y="540"/>
<text x="943" y="486" textLength="29" style="font-size:8.500px;fill:#cacaca">图层 28</text>
<text x="943" y="515" textLength="29" style="font-size:8.500px;fill:#cacaca">图层 27</text>
<text x="943" y="544" textLength="29" style="font-size:8.500px;fill:#cacaca">图层 26</text>
<use href="#lk" x="1037.500" y="484"/><use href="#lk" x="1037.500" y="513"/><use href="#lk" x="1037.500" y="541"/>
<rect x="1052" y="476" width="11" height="72" fill="#4e4e4e"/>
<rect x="1054" y="515" width="8" height="10" fill="#727272"/>
<path d="M1055 485l3-2.500 3 2.500M1055 538l3 2.500 3-2.500" class="ic" style="stroke:#8f8f8f;stroke-width:1"/>
<!-- layers footer -->
<rect x="887" y="548" width="176" height="18" fill="#535353"/>
<path d="M924 555.500h-1a2 2 0 0 0 0 4h3a2 2 0 0 0 0-4M929 559.500h1a2 2 0 0 0 0-4h-3" fill="none" stroke="#808080"/>
<text x="942" y="561" style="font-family:'Liberation Serif',serif;font-style:italic;font-size:11px;fill:#cacaca">fx</text><rect x="951" y="563" width="1.300" height="1.300" fill="#ccc"/>
<rect x="960" y="553.500" width="9" height="7.500" fill="#d8d8d8"/><circle cx="964.500" cy="557.300" r="2.200" fill="#535353"/>
<circle cx="983" cy="557.500" r="4" fill="none" stroke="#d0d0d0"/><path d="M983 553.500a4 4 0 0 0 0 8z" fill="#d0d0d0"/><rect x="988" y="563" width="1.300" height="1.300" fill="#ccc"/>
<path d="M998 554.500h3.500l1 1h5v6h-9.500z" fill="#c8c8c8"/>
<rect x="1016.500" y="553.500" width="8.500" height="8.500" fill="none" stroke="#ccc" stroke-width="1.100"/><path d="M1020.700 555.500v4M1018.700 557.700h4" stroke="#ccc"/>
<path d="M1035.500 555h7v7h-7zM1034.500 554h9M1037.500 554v-1h3v1" fill="#bcbcbc" stroke="#bcbcbc" stroke-width=".8"/><path d="M1037.500 556v5M1039 556v5M1040.500 556v5" stroke="#6b6b6b" stroke-width=".5"/>

<!-- bottom frame -->
<rect y="553" width="30" height="14" fill="#424242"/>
<rect x="0" y="566" width="1067" height="1" fill="#333"/>

<!-- taskbar -->
<rect y="567" width="1067" height="33" fill="#d8e2eb"/>
<rect x="521" y="570" width="27" height="29" rx="3" fill="#edf1f5"/>
<g fill="#1f9be0"><rect x="433" y="575" width="8" height="8" fill="#3fb4ee"/><rect x="442" y="575" width="8" height="8" fill="#3fb4ee"/><rect x="433" y="584" width="8" height="8"/><rect x="442" y="584" width="8" height="8"/></g>
<rect x="465" y="575" width="16" height="16" rx="3" fill="#d8232a"/>
<circle cx="473" cy="584" r="4" fill="none" stroke="#fff" stroke-width="1.500"/><circle cx="473" cy="584" r="1.300" fill="#fff"/><path d="M473 580q1-3 4-2.500" fill="none" stroke="#fff" stroke-width="1.300"/>
<rect x="471" y="593.500" width="4" height="1.500" rx=".7" fill="#666"/>
<circle cx="503.500" cy="583.500" r="8.500" fill="#1c7ed6"/>
<rect x="499.500" y="577" width="8" height="13" rx="1.300" fill="#dbeeff"/><rect x="500.500" y="578.500" width="6" height="9" fill="#2a8ee0"/>
<rect x="501.500" y="593.500" width="4" height="1.500" rx=".7" fill="#666"/>
<rect x="526.500" y="575" width="15" height="15" rx="2" fill="#0c2034"/>
<text x="529" y="587" style="font-size:9.500px;font-weight:bold;fill:#34b0f0">Ps</text>
<rect x="528" y="594.500" width="12" height="1.500" rx=".7" fill="#555"/>
<circle cx="565" cy="583.500" r="7.500" fill="#2a9fe6"/>
<path d="M558 583q7-6 14-1q-6-1-8 1q4 3 8 1q-4 6-10 3q3-3-4-4z" fill="#fff"/>
<path d="M558 583q3 3 9 2" stroke="#23c4a0" stroke-width="1" fill="none"/>
<rect x="563" y="593.500" width="4" height="1.500" rx=".7" fill="#666"/>
<path d="M588 577q4-.5 7.500-2.500q3.500 2 7.500 2.500v7q0 5-7.500 8q-7.500-3-7.500-8z" fill="#1368ce"/>
<path d="M594.500 578h2.500v8h4q-1 3-5 5q-2-2-1.500-5z" fill="#fff"/>
<rect x="593" y="593.500" width="4" height="1.500" rx=".7" fill="#666"/>
<path d="M617 576h6l2 2.500h9v3h-17z" fill="#f2b11e"/><rect x="617" y="580" width="17" height="11" rx="1" fill="#fbd44f"/><rect x="623" y="588" width="5" height="2" fill="#2b80c7"/>
<rect x="623.500" y="593.500" width="4" height="1.500" rx=".7" fill="#666"/>
<path d="M865.500 585l3.500-3.500 3.500 3.500" fill="none" stroke="#333" stroke-width="1"/>
<path d="M881 586q-1-3 2-3.500q2-3 5-1.500q3 0 3 3q1 2-1 3h-7q-2 0-2-1z" fill="#bbb" stroke="#333" stroke-width=".9"/><path d="M881 580l9 8" stroke="#333" stroke-width=".8"/>
<path d="M900 590l1-3 6-7q2-1 3 0t0 3l-6 7zM904 583l-2-2q1-2 3-1" fill="none" stroke="#444" stroke-width=".9"/>
<text x="922" y="587" style="font-size:10.500px;fill:#222">中</text>
<path d="M944 581.500q5-4 10 0M946 584q3-2.500 6 0M948 586.500q1-1 2 0" fill="none" stroke="#333" stroke-width="1"/><circle cx="949" cy="588.500" r=".9" fill="#333"/>
<path d="M962 581.500h2l3-2.500v9l-3-2.500h-2z" fill="none" stroke="#333" stroke-width=".9"/><path d="M969 581q1 2.500 0 5" fill="none" stroke="#999" stroke-width=".8"/>
<rect x="979" y="581.500" width="9" height="6" fill="#222"/><path d="M988 583h1.500v3H988zM979 579l3 2.500h-2z" fill="#222"/>
<text x="1034.500" y="581" text-anchor="end" style="font-size:8.500px;fill:#333">2:39</text>
<text x="1034.500" y="592" text-anchor="end" style="font-size:8.500px;fill:#333">2023/6/3</text>
<circle cx="1048.500" cy="583.500" r="5.800" fill="#736b68"/>
<text x="1046.700" y="586.500" style="font-size:8px;font-weight:bold;fill:#fff">1</text>
</svg>
</body></html>
